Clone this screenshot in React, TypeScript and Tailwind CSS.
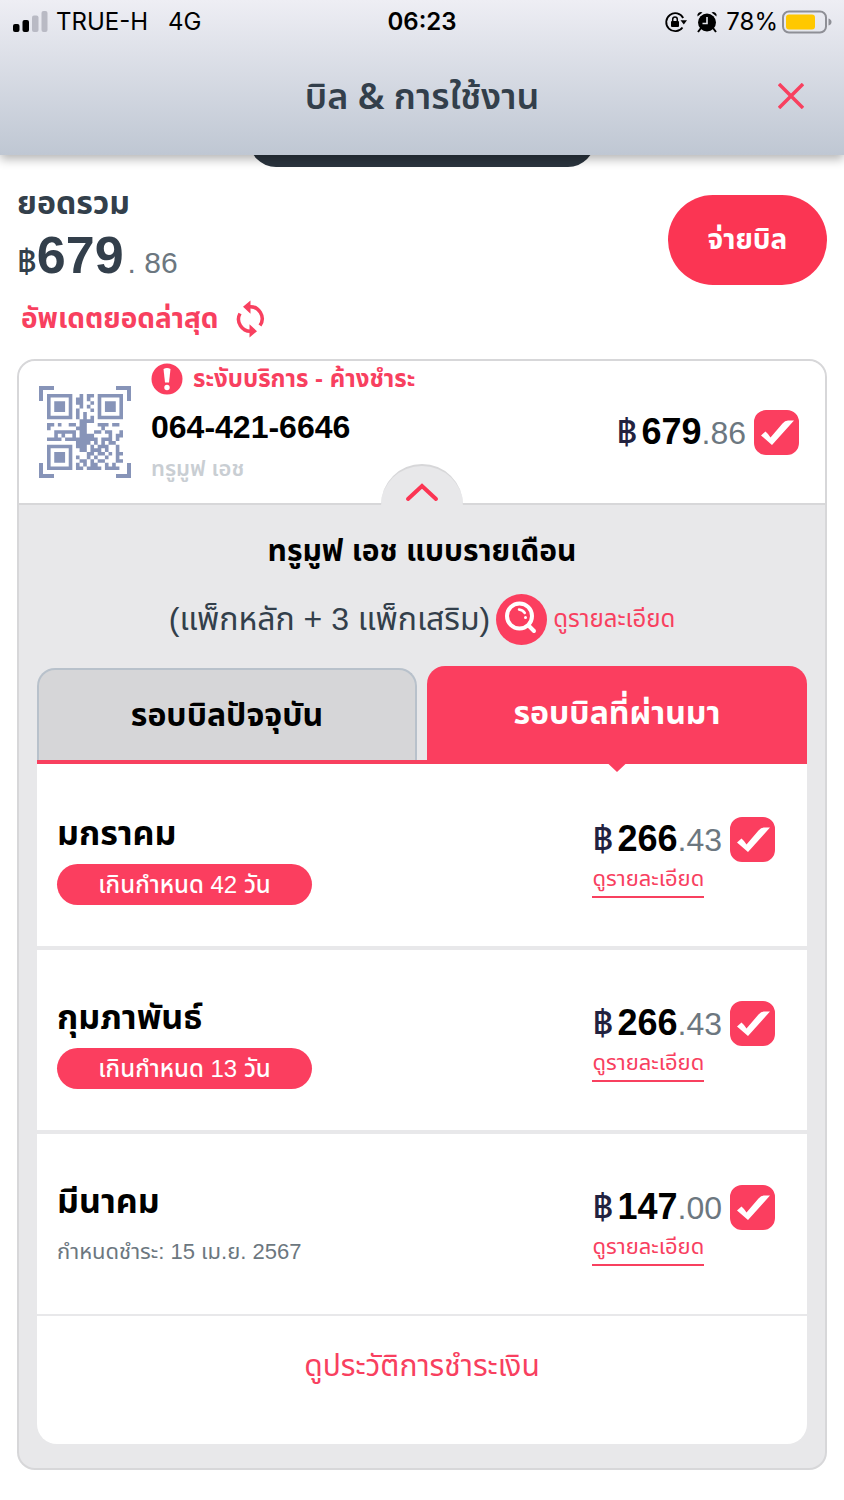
import React, { useState } from 'react';

interface Bill {
  id: string;
  month: string;
  overdue?: string;
  due?: string;
  baht: string;
  satang: string;
}

const bills: Bill[] = [
  { id: 'jan', month: 'มกราคม', overdue: 'เกินกำหนด 42 วัน', baht: '266', satang: '43' },
  { id: 'feb', month: 'กุมภาพันธ์', overdue: 'เกินกำหนด 13 วัน', baht: '266', satang: '43' },
  { id: 'mar', month: 'มีนาคม', due: 'กำหนดชำระ: 15 เม.ย. 2567', baht: '147', satang: '00' },
];

const qrRows = [
  '#######..#.##.#######',
  '#.....#.##.#..#.....#',
  '#.###.#.##..#.#.###.#',
  '#.###.#..#.#..#.###.#',
  '#.###.#.#...#.#.###.#',
  '#.....#.#.#...#.....#',
  '#######.#.#.#.#######',
  '.........####........',
  '##.#..##.##...###.##.',
  '#.......###....#.....',
  '..######.##..##.##..#',
  '..#.#..#.####....#.##',
  '####.#########.###.#.',
  '........####.#.#.##..',
  '#######.###.#.###..#.',
  '#.....#..##.###.#..#.',
  '#.###.#....##.##.#.##',
  '#.###.#.#..#.#..#..#.',
  '#.###.#..##.#.##...##',
  '#.....#.#.#.##..#.#..',
  '#######.##.####.####.',
];

// one path for all modules, so no seams show between neighbours
const qrPath = qrRows
  .map((row, y) =>
    row
      .split('')
      .map((c, x) => (c === '#' ? `M${x} ${y}h1v1h-1z` : ''))
      .join('')
  )
  .join('');

const QrIcon: React.FC = () => (
  <svg viewBox="0 0 92 92" className="h-[92px] w-[92px] shrink-0" fill="#8794b8">
    <path d="M0 0h15v4H4v11H0zM92 0v15h-4V4H77V0zM0 92V77h4v11h11v4zM92 92H77v-4h11V77h4z" />
    <path d={qrPath} transform="translate(8 8) scale(3.62)" />
  </svg>
);

interface CheckProps {
  label: string;
  checked: boolean;
  onChange: () => void;
}

const Check: React.FC<CheckProps> = ({ label, checked, onChange }) => (
  <span className="grid shrink-0">
    <input
      type="checkbox"
      aria-label={label}
      checked={checked}
      onChange={onChange}
      className="peer col-start-1 row-start-1 h-[45px] w-[45px] appearance-none rounded-xl border-2 border-[#fb3e5f] bg-white checked:bg-[#fb3e5f]"
    />
    <svg
      viewBox="0 0 45 45"
      className="pointer-events-none invisible col-start-1 row-start-1 h-[45px] w-[45px] peer-checked:visible"
      fill="#fff"
    >
      <path d="M7 25.500 11.500 21.500Q14.500 24 16.500 27.500L28.500 13.500Q31 10.500 34 10.500H40L18 35z" />
    </svg>
  </span>
);

interface AmountProps {
  baht: string;
  satang: string;
}

const Amount: React.FC<AmountProps> = ({ baht, satang }) => (
  <span className="flex items-baseline text-[32px] leading-[44px]">
    <span className="mr-1 text-[36px] font-medium text-[#22223f]">฿</span>
    <span className="text-[36px] font-bold text-black">{baht}</span>
    <span className="text-[#6c7780]">.{satang}</span>
  </span>
);

const StatusBar: React.FC = () => (
  <div className="grid grid-cols-3 items-center px-3 pt-2 font-['Inter'] text-2xl leading-7 text-black">
    <div className="flex items-center gap-2">
      <svg viewBox="0 0 36 22" className="h-[22px] w-9">
        <rect x="1" y="13" width="6.500" height="8" rx="2" />
        <rect x="10.500" y="9" width="6.500" height="12" rx="2" />
        <rect x="20" y="4.500" width="6.500" height="16.500" rx="2" fill="#b9bac4" />
        <rect x="29.500" y="0" width="6" height="21" rx="2" fill="#b9bac4" />
      </svg>
      <span className="whitespace-nowrap">TRUE-H</span>
      <span className="ml-3">4G</span>
    </div>
    <div className="text-center font-semibold">06:23</div>
    <div className="flex items-center justify-end gap-2 whitespace-nowrap">
      <svg viewBox="0 0 24 22" className="h-[22px] w-6" fill="none" stroke="#000" strokeWidth="1.800">
        <path d="M19.200 7A9 9 0 1 0 18.500 16.500" />
        <path d="M16.500 9.200h6.500l-3.200 4.300z" fill="#000" stroke="none" />
        <rect x="7" y="10" width="8" height="6" rx="1" fill="#000" stroke="none" />
        <path d="M8.700 10V8.200a2.300 2.300 0 0 1 4.600 0V10" strokeWidth="1.500" />
      </svg>
      <svg viewBox="0 0 22 22" className="h-[22px] w-[22px]" fill="#000">
        <circle cx="11" cy="11.500" r="9" />
        <path d="M1.500 5.500a3.500 3.500 0 0 1 5-4zM20.500 5.500a3.500 3.500 0 0 0-5-4z" />
        <path d="m5 17-3 4M17 17l3 4" stroke="#000" strokeWidth="2" />
        <path d="M11 6v6.500H6.500" fill="none" stroke="#e4e5ec" strokeWidth="1.600" />
      </svg>
      <span>78%</span>
      <svg viewBox="0 0 50 24" className="-ml-1 h-6 w-[50px]">
        <rect x="1" y="1.500" width="43" height="21" rx="6" fill="none" stroke="#8e8f96" strokeWidth="2" />
        <rect x="4" y="4.500" width="29" height="15" rx="3" fill="#ffc800" />
        <path d="M46.500 8.500q3 1 3 3.500t-3 3.500z" fill="#8e8f96" />
      </svg>
    </div>
  </div>
);

const App: React.FC = () => {
  const [tab, setTab] = useState<'current' | 'past'>('past');
  const [selected, setSelected] = useState<Record<string, boolean>>({ jan: true, feb: true, mar: true });

  const allSelected = bills.every(bill => selected[bill.id]);

  const toggleAll = () => {
    const next = !allSelected;
    setSelected({ jan: next, feb: next, mar: next });
  };

  return (
    <div className="min-h-screen bg-white pb-[30px] font-['Liberation_Sans','Noto_Sans_Thai',sans-serif]">
      {/* Header */}
      <header className="relative z-10 h-[155px] bg-gradient-to-b from-[#eeeef4] to-[#bfc7d3] shadow-[0_4px_10px_rgba(0,0,0,0.3)]">
        <StatusBar />
        <div className="grid grid-cols-[60px_1fr_60px] items-center px-6 pt-8">
          <h1 className="col-start-2 text-center font-['Noto_Sans','Noto_Sans_Thai',sans-serif] text-[36px] leading-[56px] font-semibold text-[#333f4b]">
            บิล & การใช้งาน
          </h1>
          <button type="button" aria-label="ปิด" className="justify-self-end pr-4">
            <svg viewBox="0 0 26 26" className="h-[26px] w-[26px]" stroke="#f8405f" strokeWidth="3.500">
              <path d="M1 1l24 24M25 1 1 25" />
            </svg>
          </button>
        </div>
      </header>
      <div className="mx-auto -mt-[42px] h-[54px] w-[346px] rounded-full bg-[#2a343e]" />

      <main className="px-[17px] pt-4">
        {/* Total */}
        <section className="flex items-start justify-between">
          <div>
            <h2 className="text-[32px] leading-10 font-bold text-[#333f4b]">ยอดรวม</h2>
            <p className="flex items-baseline text-[30px] leading-[64px] text-[#333f4b]">
              <span className="text-[34px] font-medium">฿</span>
              <span className="text-[52px] font-bold">679</span>
              <span className="ml-1 text-[#6c7780]">. 86</span>
            </p>
            <button type="button" className="flex items-center gap-4 pl-1 text-[28px] leading-[48px] font-bold text-[#f8405f]">
              อัพเดตยอดล่าสุด
              <svg viewBox="0 0 30 38" className="h-[38px] w-[30px]" fill="none" stroke="#f8405f" strokeWidth="3.500">
                <path d="M5 13.500A12 12 0 0 0 16.500 31.200" />
                <path d="M25 25.500A12 12 0 0 0 13.500 6.800" />
                <path d="M15.500.5 8 6.800l7.500 7zM14.500 24.200l7.500 7-7.500 6.300z" fill="#f8405f" stroke="none" />
              </svg>
            </button>
          </div>
          <button
            type="button"
            className="mt-3 h-[90px] w-[159px] rounded-full bg-[#fb3553] text-[28px] font-bold text-white"
          >
            จ่ายบิล
          </button>
        </section>

        {/* Account card */}
        <section className="mt-4 overflow-hidden rounded-[18px] border-2 border-[#d7d7d9] bg-[#e8e8ea]">
          <div className="relative flex h-36 items-center border-b-2 border-[#d7d7d9] bg-white pr-[26px] pl-5">
            <QrIcon />
            <div className="ml-5 flex-1 self-start">
              <p className="flex items-center gap-[10px] text-2xl leading-9 font-bold text-[#f8405f]">
                <svg viewBox="0 0 32 32" className="h-8 w-8">
                  <circle cx="16" cy="16" r="15.500" fill="#fb3e5f" />
                  <path d="M12.500 6q3.500-2 7 0l-1.500 13.500h-4z" fill="#fff" />
                  <circle cx="16" cy="24.500" r="2.700" fill="#fff" />
                </svg>
                ระงับบริการ - ค้างชำระ
              </p>
              <p className="mt-2 text-[32px] leading-[44px] font-bold text-black">064-421-6646</p>
              <p className="text-[22px] leading-10 font-semibold text-[#c9ced3]">ทรูมูฟ เอช</p>
            </div>
            <div className="flex items-center gap-2">
              <Amount baht="679" satang="86" />
              <Check label="064-421-6646" checked={allSelected} onChange={toggleAll} />
            </div>
            <button
              type="button"
              aria-label="ย่อ"
              className="absolute -bottom-[2px] left-1/2 flex h-[41px] w-[82px] -translate-x-1/2 justify-center rounded-t-full border-t-2 border-[#d7d7d9] bg-[#e8e8ea]"
            >
              <svg viewBox="0 0 34 20" className="mt-4 h-5 w-[34px]" fill="none" stroke="#fb3553" strokeWidth="4" strokeLinecap="round">
                <path d="m3 17 14-13 14 13" />
              </svg>
            </button>
          </div>

          <div className="px-[18px] pt-5 pb-6">
            <h3 className="text-center text-[30px] leading-[52px] font-bold text-black">ทรูมูฟ เอช แบบรายเดือน</h3>
            <div className="flex h-[84px] items-center justify-center gap-[6px] text-[32px] text-[#333f4b]">
              <span>(แพ็กหลัก + 3 แพ็กเสริม)</span>
              <a href="#package" className="flex items-center gap-[6px] text-2xl text-[#f8405f]">
                <svg viewBox="0 0 51 51" className="h-[51px] w-[51px]">
                  <circle cx="25.500" cy="25.500" r="25.500" fill="#fb3e5f" />
                  <g fill="none" stroke="#fff" strokeWidth="4" strokeLinecap="round">
                    <circle cx="23.500" cy="22" r="12.500" />
                    <path d="m32.500 31.500 5.500 5.500" />
                    <path d="M23 15.500q4 .5 5.800 3.500" strokeWidth="2.500" />
                  </g>
                  <circle cx="29.500" cy="23.500" r="1.500" fill="#fff" />
                </svg>
                ดูรายละเอียด
              </a>
            </div>

            {/* Tabs */}
            <div className="mt-[5px] grid grid-cols-2 items-end gap-[10px] border-b-4 border-[#f8405f]">
              <button
                type="button"
                onClick={() => setTab('current')}
                className="h-[92px] rounded-t-[18px] border-2 border-b-0 border-[#b8c1cb] bg-[#d6d6d8] text-[32px] font-bold text-black"
              >
                รอบบิลปัจจุบัน
              </button>
              <button
                type="button"
                onClick={() => setTab('past')}
                className="relative h-[94px] rounded-t-[18px] bg-[#fb3e5f] text-[32px] font-bold text-white"
              >
                รอบบิลที่ผ่านมา
                {tab === 'past' && (
                  <svg viewBox="0 0 18 12" className="absolute top-full left-1/2 h-3 w-[18px] -translate-x-1/2" fill="#fb3e5f">
                    <path d="M0 0h18v3.500L9 12 0 3.500z" />
                  </svg>
                )}
              </button>
            </div>

            {/* Bills */}
            <div className="rounded-b-[20px] bg-white pt-[2px]">
              <ul>
                {bills.map(bill => (
                  <li
                    key={bill.id}
                    className="flex h-[184px] items-start justify-between border-b-4 border-[#e8e8ea] pt-9 pr-8 pl-5 last:h-[182px] last:border-b-2"
                  >
                    <div>
                      <h4 className="text-[34px] leading-[62px] font-bold text-black">{bill.month}</h4>
                      {bill.overdue && (
                        <p className="flex h-[41px] w-[255px] items-center justify-center rounded-full bg-[#fb3e5f] text-2xl font-medium text-white">
                          {bill.overdue}
                        </p>
                      )}
                      {bill.due && <p className="text-[22px] leading-10 text-[#6c7780]">{bill.due}</p>}
                    </div>
                    <div className="pt-[15px]">
                      <div className="flex items-center gap-2">
                        <Amount baht={bill.baht} satang={bill.satang} />
                        <Check
                          label={bill.month}
                          checked={selected[bill.id]}
                          onChange={() => setSelected({ ...selected, [bill.id]: !selected[bill.id] })}
                        />
                      </div>
                      <a
                        href={`#${bill.id}`}
                        className="inline-block border-b-2 border-[#f8405f] text-[22px] leading-[34px] text-[#f8405f]"
                      >
                        ดูรายละเอียด
                      </a>
                    </div>
                  </li>
                ))}
              </ul>
              <div className="pt-6 pb-[52px] text-center">
                <a href="#history" className="inline-block text-[30px] leading-[52px] text-[#f8405f]">
                  ดูประวัติการชำระเงิน
                </a>
              </div>
            </div>
          </div>
        </section>
      </main>
    </div>
  );
};

export default App;
